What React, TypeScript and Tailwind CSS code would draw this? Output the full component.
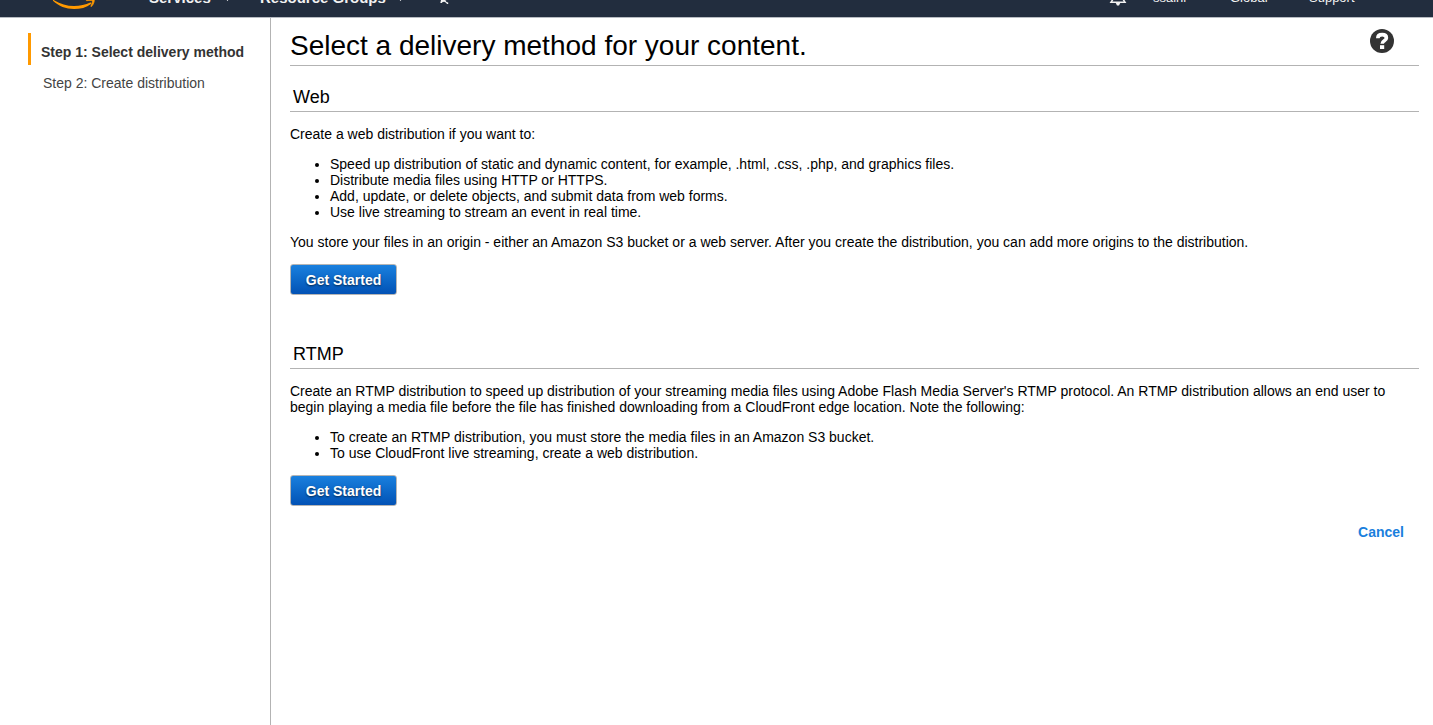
import React from "react";

function Caret() {
  return (
    <svg width="9" height="12" viewBox="0 0 9 12" fill="none" stroke="#ffffff" strokeWidth="1.2" aria-hidden="true">
      <path d="M1 4 4.500 8 8 4" />
    </svg>
  );
}

function Header() {
  return (
    <header className="-mt-[23px] flex h-[41px] shrink-0 items-center border-b border-[#b7bbc2] bg-[#222d3e] pl-[52px] pr-[66px] text-[#f2f2f2]">
      <a href="#home" aria-label="AWS home" className="mr-[53px] w-11 shrink-0 pb-1">
        <svg width="44" height="28" viewBox="0 0 44 28" className="block" aria-hidden="true">
          <path d="M1 19.300C1.200 18.900 1.700 19 2.500 19.500 8 23 15 25 22 25c6 0 11.700-1.300 16.300-3.400.9-.4 1.500.6.7 1.300C34.500 26.500 28.300 28 22 28 14 28 6.500 25 1.200 20c-.3-.3-.4-.5-.2-.7z" fill="#ff9900" />
          <path d="M40.300 19.900c-.7-.8-4-.4-5.600-.2-.5 0-.6-.4-.1-.7 2.700-1.900 7.100-1.400 7.600-.7.500.6-.2 5-2.700 7.100-.4.300-.8.200-.6-.3.600-1.400 2-4.400 1.400-5.200z" fill="#ff9900" stroke="#ff9900" strokeWidth=".7" />
        </svg>
      </a>
      <nav className="flex items-center pt-0.5 text-[15px]/4 font-bold text-shadow-[0_1px_1px_#000000]">
        <button type="button" className="flex w-[111px] items-center justify-between pr-7">
          Services <Caret />
        </button>
        <button type="button" className="flex w-44 items-center justify-between pr-[31px]">
          Resource Groups <Caret />
        </button>
        <button type="button" aria-label="Pin shortcuts" className="block">
          <svg width="16" height="16" viewBox="0 0 16 16" fill="#f2f2f2" aria-hidden="true">
            <path d="M6 0 12 7 11 10 9.300 10.200 10.500 12 12.200 12.500 12.200 14 11 14 10 12.700 8.300 11.700 6.500 12 6 13 4.300 13 5 10 2 6z" />
          </svg>
        </button>
      </nav>
      <div className="ml-auto flex items-center pt-0.5 text-[13px]/4 text-shadow-[0_1px_1px_#000000]">
        <button type="button" aria-label="Notifications" className="mr-[26px] block">
          <svg width="18" height="18" viewBox="0 0 18 18" fill="none" stroke="#f2f2f2" strokeWidth="1.500" aria-hidden="true">
            <path d="M9 1A4.500 4.500 0 0 0 4.500 5.500v4L2 13.200h14l-2.500-3.700v-4A4.500 4.500 0 0 0 9 1z" />
            <path d="M6.500 13.500h5L10 16.500H8z" fill="#f2f2f2" stroke="none" />
          </svg>
        </button>
        <button type="button" className="w-[77px] text-left">ssaini</button>
        <button type="button" className="w-[79px] text-left">Global</button>
        <button type="button" className="w-[58px] text-left">Support</button>
      </div>
    </header>
  );
}

function Section({ title, children }: { title: string; children: React.ReactNode }) {
  return (
    <section className="flex flex-col gap-3.5">
      <h2 className="border-b border-[#b3b3b3] px-[3px] pb-1 text-lg/5">{title}</h2>
      {children}
      <div className="flex">
        <button
          type="button"
          className="h-[31px] w-[107px] rounded-[3px] border border-[#b5b5b5] bg-linear-to-b from-[#1a80de] to-[#0352b5] text-sm/4 font-bold text-white text-shadow-[0_1px_2px_#00000099]"
        >
          Get Started
        </button>
      </div>
    </section>
  );
}

export default function App() {
  return (
    <div className="flex min-h-screen flex-col bg-white font-['Liberation_Sans',Arial,sans-serif] text-sm/4 text-black">
      <Header />
      <div className="flex flex-1">
        <aside className="w-[271px] shrink-0 border-r border-[#b3b3b3] pl-7 pt-[15px]">
          <ol className="text-[#444444]">
            <li className="flex h-8 items-center border-l-3 border-[#ff9900] pl-2.5 pt-1.5 font-bold text-[#333333]">
              Step 1: Select delivery method
            </li>
            <li className="pl-[15px] pt-2.5">Step 2: Create distribution</li>
          </ol>
        </aside>
        <main className="min-w-0 flex-1 pl-[19px] pr-3.5">
          <div className="flex h-12 items-start justify-between border-b border-[#b3b3b3] pr-[25px]">
            <h1 className="pt-3 text-[28px]/8">Select a delivery method for your content.</h1>
            <button type="button" aria-label="Help" className="mt-[11px] block">
              <svg width="24" height="24" viewBox="0 0 24 24" aria-hidden="true">
                <circle cx="12" cy="12" r="12" fill="#333333" />
                <path d="M7.800 9.200C7.800 6.500 9.500 5.600 12.200 5.600s4.200 1.200 4.200 3.300c0 3-4.200 2.700-4.200 5.800" fill="none" stroke="#fff" strokeWidth="3.600" />
                <path d="M10 16.200h4.200v3.800H10z" fill="#fff" />
              </svg>
            </button>
          </div>
          <div className="flex flex-col gap-[49px] pt-[21px]">
            <Section title="Web">
              <p>Create a web distribution if you want to:</p>
              <ul className="list-disc pl-10">
                <li>Speed up distribution of static and dynamic content, for example, .html, .css, .php, and graphics files.</li>
                <li>Distribute media files using HTTP or HTTPS.</li>
                <li>Add, update, or delete objects, and submit data from web forms.</li>
                <li>Use live streaming to stream an event in real time.</li>
              </ul>
              <p>
                You store your files in an origin - either an Amazon S3 bucket or a web server. After you create the
                distribution, you can add more origins to the distribution.
              </p>
            </Section>
            <Section title="RTMP">
              <p>
                Create an RTMP distribution to speed up distribution of your streaming media files using Adobe Flash
                Media Server's RTMP protocol. An RTMP distribution allows an end user to begin playing a media file
                before the file has finished downloading from a CloudFront edge location. Note the following:
              </p>
              <ul className="list-disc pl-10">
                <li>To create an RTMP distribution, you must store the media files in an Amazon S3 bucket.</li>
                <li>To use CloudFront live streaming, create a web distribution.</li>
              </ul>
            </Section>
          </div>
          <div className="flex justify-end pr-[15px] pt-[18px]">
            <a href="#cancel" className="font-bold text-[#1a7fdd]">Cancel</a>
          </div>
        </main>
      </div>
    </div>
  );
}
